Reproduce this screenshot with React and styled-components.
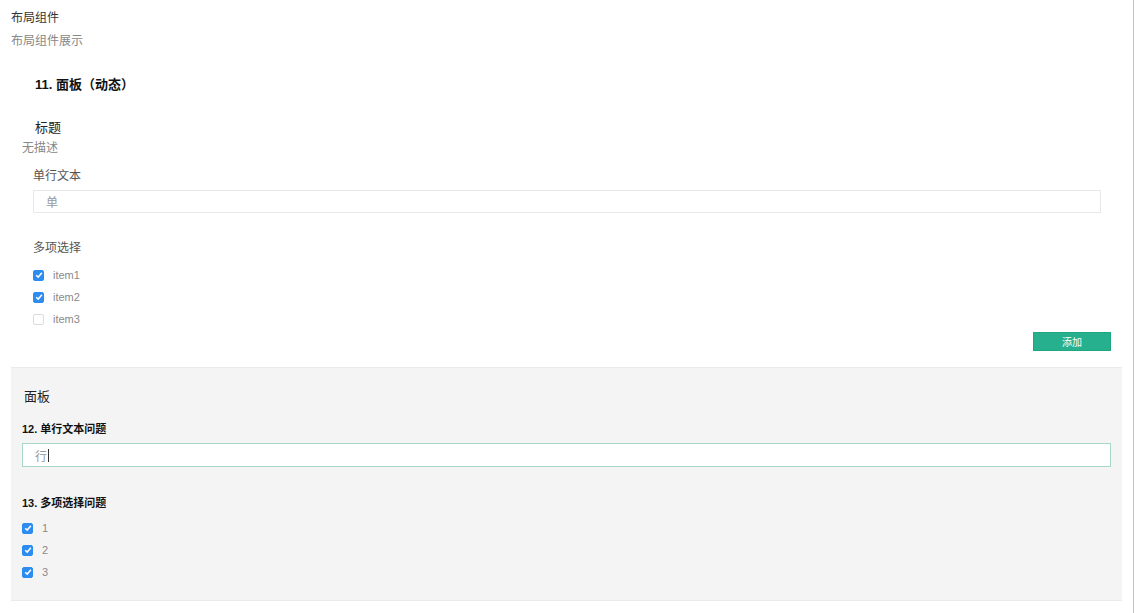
import React from 'react';
import styled, { createGlobalStyle } from 'styled-components';

const GlobalStyle = createGlobalStyle`
    body {
        margin: 0;
        background: #fff;
        font-family: "Helvetica Neue", "Liberation Sans", "Noto Sans CJK SC", sans-serif;
    }
`

const Page = styled.div`
    min-height: 613px;
    box-sizing: border-box;
    padding: 10px 11px 0 11px;
    border-right: 1px solid #c4c4c4;
`

const Content = styled.div`
    width: 1111px;
`

const PageTitle = styled.div`
    font-size: 12px;
    line-height: 16px;
    color: #333;
`

const PageSub = styled.div`
    font-size: 12px;
    line-height: 16px;
    color: #888;
    margin-top: 7px;
`

const SectionTitle = styled.div`
    font-size: 13px;
    line-height: 18px;
    font-weight: 600;
    color: #111;
    margin: 27px 0 0 24px;
`

const BlockTitle = styled.div`
    font-size: 13px;
    line-height: 18px;
    color: #222;
    margin: 25px 0 0 24px;
`

const BlockDesc = styled.div`
    font-size: 12px;
    line-height: 16px;
    color: #888;
    margin: 3px 0 0 11px;
`

const Form = styled.div`
    padding: 0 21px 0 22px;
`

const Label = styled.div`
    font-size: 12px;
    line-height: 16px;
    color: #555;
    margin-top: ${p => p.$top}px;
    font-weight: ${p => (p.$bold ? 600 : 400)};
    ${p => p.$bold && 'color: #111; font-size: 11px;'}
`

const TextInput = styled.div`
    margin-top: 6px;
    height: ${p => p.$h}px;
    box-sizing: border-box;
    background: #fff;
    border: 1px solid ${p => (p.$focus ? '#a6d8c6' : '#e8e8e8')};
    padding-left: 12px;
    display: flex;
    align-items: center;
    font-size: 12px;
    color: #999;
`

const Caret = styled.span`
    display: inline-block;
    width: 1px;
    height: 13px;
    background: #333;
    margin-left: 1px;
`

const Options = styled.div`
    margin-top: ${p => p.$top}px;
    display: flex;
    flex-direction: column;
`

const Option = styled.label`
    height: 22px;
    display: flex;
    align-items: center;
    gap: 9px;
    font-size: 11px;
    color: #8a8a8a;
`

const Box = styled.span`
    width: 11px;
    height: 11px;
    box-sizing: border-box;
    border-radius: 2px;
    background: ${p => (p.$checked ? '#2d8cf0' : '#fff')};
    border: 1px solid ${p => (p.$checked ? '#2d8cf0' : '#dcdcdc')};
    display: flex;
    align-items: center;
    justify-content: center;
`

const Actions = styled.div`
    display: flex;
    justify-content: flex-end;
    margin-top: 2px;
    padding-right: 11px;
`

const AddButton = styled.button`
    width: 78px;
    height: 19px;
    border: 1px solid #1fa784;
    background: #27b08d;
    color: #fff;
    font-size: 10px;
    font-family: inherit;
    padding: 0;
    cursor: pointer;
`

const Panel = styled.div`
    margin-top: 16px;
    background: #f4f4f4;
    border-top: 1px solid #eaeaea;
    border-bottom: 1px solid #eaeaea;
    padding: 20px 11px 17px 11px;
`

const PanelTitle = styled.div`
    font-size: 13px;
    line-height: 18px;
    color: #222;
    margin-left: 2px;
`

const Check = ({ checked, children }) => (
    <Option>
        <Box $checked={checked}>
            {checked && (
                <svg width="8" height="8" viewBox="0 0 8 8">
                    <path d="M1.2 4.2 L3.2 6.1 L6.9 1.8" fill="none" stroke="#fff" strokeWidth="1.5" />
                </svg>
            )}
        </Box>
        {children}
    </Option>
)

const App = () => (
    <Page>
        <GlobalStyle />
        <Content>
            <PageTitle>布局组件</PageTitle>
            <PageSub>布局组件展示</PageSub>
            <SectionTitle>11. 面板（动态）</SectionTitle>
            <BlockTitle>标题</BlockTitle>
            <BlockDesc>无描述</BlockDesc>
            <Form>
                <Label $top={12}>单行文本</Label>
                <TextInput $h={23}>单</TextInput>
                <Label $top={27}>多项选择</Label>
                <Options $top={8}>
                    <Check checked>item1</Check>
                    <Check checked>item2</Check>
                    <Check>item3</Check>
                </Options>
            </Form>
            <Actions>
                <AddButton>添加</AddButton>
            </Actions>
            <Panel>
                <PanelTitle>面板</PanelTitle>
                <Label $top={15} $bold>12. 单行文本问题</Label>
                <TextInput $h={24} $focus>行<Caret /></TextInput>
                <Label $top={28} $bold>13. 多项选择问题</Label>
                <Options $top={6}>
                    <Check checked>1</Check>
                    <Check checked>2</Check>
                    <Check checked>3</Check>
                </Options>
            </Panel>
        </Content>
    </Page>
)

export default App;
